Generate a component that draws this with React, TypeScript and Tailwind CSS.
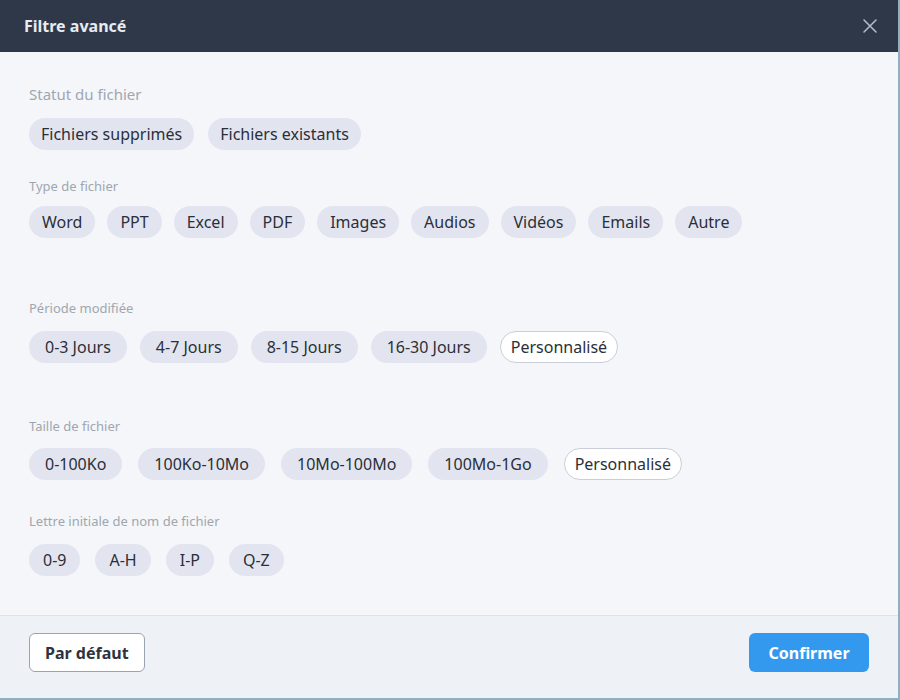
import React from 'react';

const font = { fontFamily: '"Noto Sans", "Open Sans", sans-serif' };

const Chip: React.FC<{ label: string; pad: string; outlined?: boolean }> = ({ label, pad, outlined }) => (
  <button
    className={
      outlined
        ? 'h-8 px-[10px] rounded-full bg-white border border-[#c9ced8] text-[16px] text-[#2b2f38]'
        : `h-8 ${pad} rounded-full bg-[#e2e5f0] text-[16px] text-[#2b2f38]`
    }
  >
    {label}
  </button>
);

// marges, espacements et rembourrages mesurés sur la capture
const sections = [
  { title: 'Statut du fichier', items: ['Fichiers supprimés', 'Fichiers existants'], big: true, top: 'mt-[32px]', below: 'mt-[14px]', gap: 'gap-[14px]', pad: 'px-[12px]' },
  { title: 'Type de fichier', items: ['Word', 'PPT', 'Excel', 'PDF', 'Images', 'Audios', 'Vidéos', 'Emails', 'Autre'], top: 'mt-[27px]', below: 'mt-[11px]', gap: 'gap-[12px]', pad: 'px-[13px]' },
  { title: 'Période modifiée', items: ['0-3 Jours', '4-7 Jours', '8-15 Jours', '16-30 Jours'], custom: true, top: 'mt-[61px]', below: 'mt-[14px]', gap: 'gap-[13px]', pad: 'px-[16px]' },
  { title: 'Taille de fichier', items: ['0-100Ko', '100Ko-10Mo', '10Mo-100Mo', '100Mo-1Go'], custom: true, top: 'mt-[54px]', below: 'mt-[13px]', gap: 'gap-[16px]', pad: 'px-[16px]' },
  { title: 'Lettre initiale de nom de fichier', items: ['0-9', 'A-H', 'I-P', 'Q-Z'], top: 'mt-[32px]', below: 'mt-[14px]', gap: 'gap-[15px]', pad: 'px-[14px]' },
];

export default function App() {
  return (
    <div style={font} className="w-[900px] h-[700px] flex flex-col bg-[#f4f6fa] border-r-2 border-b-2 border-[#8fb0c0]">
      {/* En-tête */}
      <div className="h-[52px] shrink-0 bg-[#2e3849] flex items-center justify-between pl-6 pr-5">
        <h1 className="text-[16px] font-bold text-[#e8ebf0]">Filtre avancé</h1>
        <svg width="16" height="16" viewBox="0 0 16 16" className="text-[#b8bfca]">
          <path d="M2 2L14 14M14 2L2 14" stroke="currentColor" strokeWidth="1.5" strokeLinecap="round" />
        </svg>
      </div>

      {/* Contenu */}
      <div className="flex-1 px-[29px]">
        {sections.map((s) => (
          <div key={s.title} className={s.top}>
            <div
              className={
                s.big
                  ? 'text-[15px] leading-5 text-[#a1a6ae]'
                  : 'text-[13px] leading-[18px] text-[#a1a6ae]'
              }
            >
              {s.title}
            </div>
            <div className={`${s.below} flex ${s.gap}`}>
              {s.items.map((it) => (
                <Chip key={it} label={it} pad={s.pad} />
              ))}
              {s.custom && <Chip label="Personnalisé" pad="" outlined />}
            </div>
          </div>
        ))}
      </div>

      {/* Pied */}
      <div className="h-[83px] shrink-0 bg-[#eef2f7] border-t border-[#dde2ea] flex items-start justify-between pt-[17px] px-[29px]">
        <button className="h-[39px] px-[15px] rounded-md bg-white border border-[#9aa3b0] text-[16px] font-bold text-[#2d3340]">
          Par défaut
        </button>
        <button className="h-[39px] w-[120px] rounded-md bg-[#3399ef] text-[16px] font-bold text-white">
          Confirmer
        </button>
      </div>
    </div>
  );
}
